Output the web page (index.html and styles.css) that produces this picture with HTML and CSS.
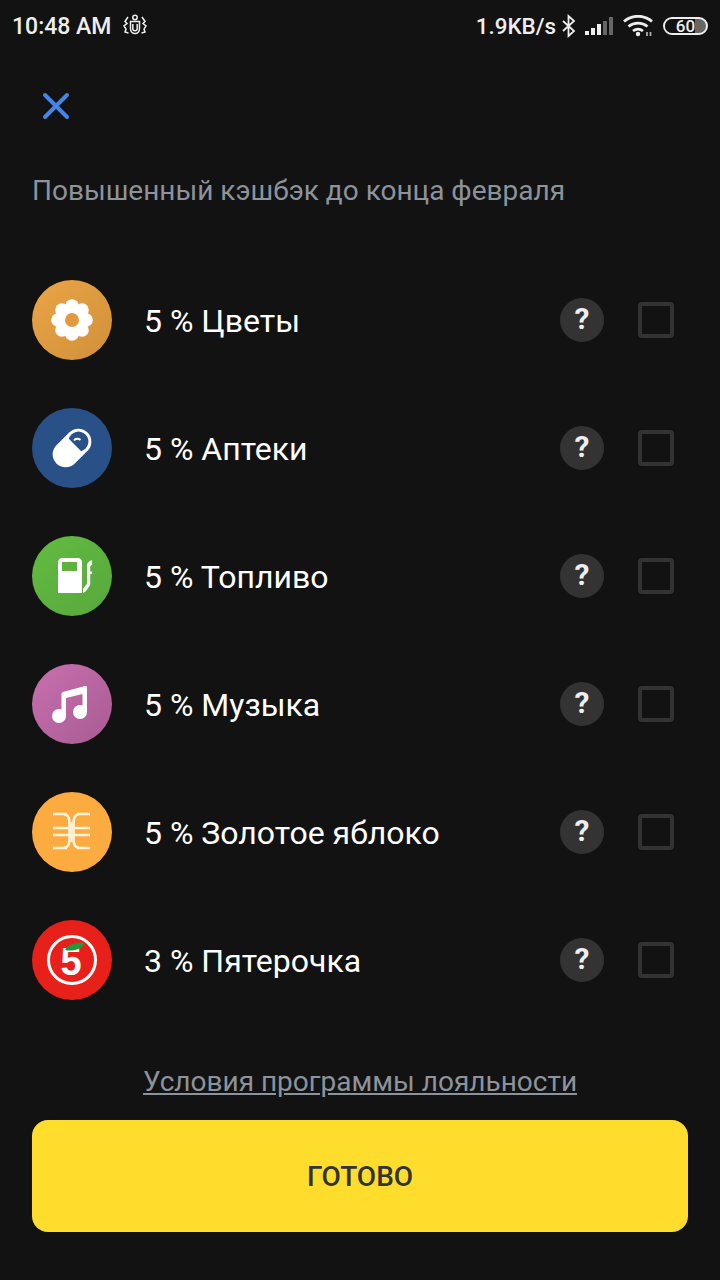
FILE: index.html
```html
<!DOCTYPE html>
<html lang="ru">

<head>
    <meta charset="UTF-8">
    <meta name="viewport" content="width=device-width, initial-scale=1.0">
    <title>Кэшбэк</title>
    <link rel="stylesheet" href="styles.css">
</head>

<body>
    <div class="status">
        <div class="status-left">
            <span class="time">10:48 AM</span>
            <svg class="bug" width="24" height="24" viewBox="0 0 24 24" fill="none" stroke="#eee" stroke-width="1.5">
                <circle cx="12" cy="3.500" r="2.200"/>
                <path d="M7.500 7.500h9v7c0 3-2 5-4.500 5s-4.500-2-4.500-5z"/>
                <path d="M9.800 10v4.500c0 1.300 1 2.300 2.200 2.300s2.200-1 2.200-2.300V10"/>
                <path d="M5 3 2 7.500l2 2-3 2.500 2 3-1 3 3.500 1M19 3l3 4.500-2 2 3 2.500-2 3 1 3-3.500 1"/>
            </svg>
        </div>
        <div class="status-right">
            <span class="speed">1.9KB/s</span>
            <svg class="bt" width="16" height="24" viewBox="0 0 16 24" fill="none" stroke="#eee" stroke-width="1.800">
                <path d="M2 7l11 10-5.500 5V2L13 7 2 17"/>
            </svg>
            <svg class="signal" width="28" height="20" viewBox="0 0 28 20">
                <rect x="0" y="15" width="4" height="4" fill="#eee"/>
                <rect x="6" y="12" width="4" height="7" fill="#eee"/>
                <rect x="12" y="8" width="4" height="11" fill="#eee"/>
                <rect x="18" y="5" width="4" height="14" fill="#666"/>
                <rect x="24" y="1" width="4" height="18" fill="#666"/>
            </svg>
            <svg class="wifi" width="30" height="22" viewBox="0 0 30 22" fill="none" stroke="#eee" stroke-width="2.800">
                <path d="M1 6.500c8-7 20-7 28 0"/>
                <path d="M5.500 11.500c5.500-4.500 13.500-4.500 19 0"/>
                <path d="M10 16c3-2.300 7-2.300 10 0"/>
                <circle cx="15" cy="19" r="2.200" fill="#eee" stroke="none"/>
                <path d="M24 17v4M27.500 17v4" stroke-width="1.800" stroke="#aaa"/>
            </svg>
            <div class="battery">
                <div class="battery-fill"></div>
                <span class="battery-text">60</span>
            </div>
        </div>
    </div>

    <div class="close">
        <svg width="28" height="28" viewBox="0 0 28 28" fill="none" stroke="#4685e8" stroke-width="4" stroke-linecap="round">
            <path d="M3 3l22 22M25 3 3 25"/>
        </svg>
    </div>

    <div class="title">Повышенный кэшбэк до конца февраля</div>

    <div class="list">
        <div class="row">
            <div class="icon flowers">
                <svg width="44" height="44" viewBox="0 0 44 44">
                    <g fill="#fff">
                        <circle cx="22" cy="8" r="6.800"/>
                        <circle cx="22" cy="36" r="6.800"/>
                        <circle cx="8" cy="22" r="6.800"/>
                        <circle cx="36" cy="22" r="6.800"/>
                        <circle cx="12" cy="12" r="6.800"/>
                        <circle cx="32" cy="12" r="6.800"/>
                        <circle cx="12" cy="32" r="6.800"/>
                        <circle cx="32" cy="32" r="6.800"/>
                        <circle cx="22" cy="22" r="12"/>
                    </g>
                    <circle cx="22" cy="22" r="7" fill="#e39a3f"/>
                </svg>
            </div>
            <div class="name">5 % Цветы</div>
            <div class="help">?</div>
            <div class="check"></div>
        </div>
        <div class="row">
            <div class="icon pharmacy">
                <svg width="44" height="44" viewBox="0 0 44 44">
                    <rect x="0" y="9" width="44" height="26" rx="13" fill="#fff" transform="rotate(-45 22 22)"/>
                    <path d="M18.800 12.800 31.200 25.200A10 10 0 1 0 18.800 12.800z" fill="#2a5088"/>
                    <path d="M24 14.500c1.500-2 4.500-2.300 6.500-.5" stroke="#fff" stroke-width="2" fill="none"/>
                </svg>
            </div>
            <div class="name">5 % Аптеки</div>
            <div class="help">?</div>
            <div class="check"></div>
        </div>
        <div class="row">
            <div class="icon fuel">
                <svg width="44" height="44" viewBox="0 0 44 44">
                    <path d="M8 9c0-3.500 1.500-5 5-5h14c3.500 0 5 1.500 5 5v30H8z" fill="#fff"/>
                    <path d="M12 8h15v9H12z" fill="#5eb33f"/>
                    <path d="M33 39v-4l4-5.500V11c0-2 2-4 5-5v5l-1.800 1v5.500H42v2.500h-1.800v11L36 37z" fill="#fff"/>
                </svg>
            </div>
            <div class="name">5 % Топливо</div>
            <div class="help">?</div>
            <div class="check"></div>
        </div>
        <div class="row">
            <div class="icon music">
                <svg width="44" height="44" viewBox="0 0 44 44">
                    <g fill="#fff">
                        <circle cx="9" cy="34" r="7"/>
                        <circle cx="30" cy="30" r="7"/>
                        <path d="M11.500 34V12.500c0-1.500.8-2.400 2.300-2.700L35 4c1.200-.2 2 .5 2 1.700V30h-4.500V12l-16.500 4v18z"/>
                    </g>
                </svg>
            </div>
            <div class="name">5 % Музыка</div>
            <div class="help">?</div>
            <div class="check"></div>
        </div>
        <div class="row">
            <div class="icon apple">
                <svg width="44" height="44" viewBox="0 0 44 44" fill="none" stroke="#fff3dc" stroke-width="2.600">
                    <path d="M3 4h14M27 4h13M3 38h14M27 38h13M3 18h37M3 25h37"/>
                    <path d="M14 4c5 1 5.500 5 5.500 10v14c0 5-.5 9-5.500 10"/>
                    <path d="M29 4c-5 1-5.500 5-5.500 10v14c0 5 .5 9 5.500 10"/>
                    <path d="M21.500 12v20" stroke-width="2"/>
                </svg>
            </div>
            <div class="name">5 % Золотое яблоко</div>
            <div class="help">?</div>
            <div class="check"></div>
        </div>
        <div class="row">
            <div class="icon pyat">
                <svg width="52" height="52" viewBox="0 0 52 52">
                    <circle cx="26" cy="26" r="23.500" fill="none" stroke="#fff" stroke-width="3"/>
                    <text class="pyat-five" x="25" y="41">5</text>
                    <path d="M19 16c3-6 12-8 20-7-3 6-12 9-20 7z" fill="#1c9a3c"/>
                </svg>
            </div>
            <div class="name">3 % Пятерочка</div>
            <div class="help">?</div>
            <div class="check"></div>
        </div>
    </div>

    <a class="terms">Условия программы лояльности</a>
    <button class="done">ГОТОВО</button>
</body>

</html>
```

FILE: styles.css
```css
body {
    margin: 0;
    width: 720px;
    height: 1280px;
    overflow: hidden;
    background-color: #121212;
    color: #fff;
    font-family: Roboto, "Noto Sans", sans-serif;
}

.status {
    display: flex;
    justify-content: space-between;
    align-items: center;
    height: 52px;
    padding: 0 12px;
    box-sizing: border-box;
    color: #eee;
    font-weight: 500;
}

.status-left,
.status-right {
    display: flex;
    align-items: center;
}

.time {
    font-size: 23px;
}

.speed {
    font-size: 22.4px;
}

.bug {
    margin-left: 12px;
}

.bt {
    margin-left: 5px;
}

.signal {
    margin-left: 8px;
}

.wifi {
    margin-left: 10px;
}

.battery {
    display: flex;
    align-items: center;
    justify-content: center;
    position: relative;
    width: 41px;
    height: 14px;
    margin-left: 10px;
    border: 2px solid #eee;
    border-radius: 9px;
    background-color: #666;
    font-size: 17px;
}

.battery-fill {
    position: absolute;
    left: 0;
    top: 0;
    bottom: 0;
    width: 72%;
    border-radius: 7px 0 0 7px;
    background-color: #121212;
}

.battery-text {
    position: relative;
}

.close {
    display: flex;
    padding: 40px 0 0 42px;
}

.title {
    margin: 55px 0 0 32px;
    font-size: 28px;
    line-height: 32px;
    color: #8c939b;
}

.list {
    margin-top: 73px;
}

.row {
    display: flex;
    align-items: center;
    height: 80px;
    margin: 0 46px 48px 32px;
}

.icon {
    display: flex;
    align-items: center;
    justify-content: center;
    flex-shrink: 0;
    width: 80px;
    height: 80px;
    border-radius: 50%;
}

.flowers { background: linear-gradient(135deg, #eaa545, #d08f3a); }
.pharmacy { background-color: #2a5088; }
.fuel { background: linear-gradient(135deg, #63bb42, #57a83c); }
.music { background: linear-gradient(135deg, #c86fb0, #a85c92); }
.apple { background-color: #fbab3f; }
.pyat { background-color: #e8201a; }

.name {
    flex: 1;
    margin-left: 32px;
    padding-top: 1px;
    font-size: 32px;
}

.help {
    width: 44px;
    height: 44px;
    border-radius: 50%;
    background-color: #333;
    color: #eee;
    font-size: 30px;
    font-weight: 700;
    line-height: 42px;
    text-align: center;
}

.check {
    width: 36px;
    height: 36px;
    margin-left: 34px;
    box-sizing: border-box;
    border: 4px solid #333;
    border-radius: 4px;
}

.pyat-five {
    font-family: "Liberation Sans", sans-serif;
    font-size: 38px;
    font-weight: 700;
    fill: #fff;
    text-anchor: middle;
}

.terms {
    display: block;
    margin-top: 66px;
    text-align: center;
    font-size: 28px;
    line-height: 32px;
    color: #8c939b;
    text-decoration: underline;
}

.done {
    display: block;
    width: 656px;
    height: 112px;
    margin: 22px 0 0 32px;
    border: none;
    border-radius: 16px;
    background-color: #ffdd2d;
    color: #333;
    font-family: Roboto, sans-serif;
    font-size: 28px;
    font-weight: 500;
}
```
